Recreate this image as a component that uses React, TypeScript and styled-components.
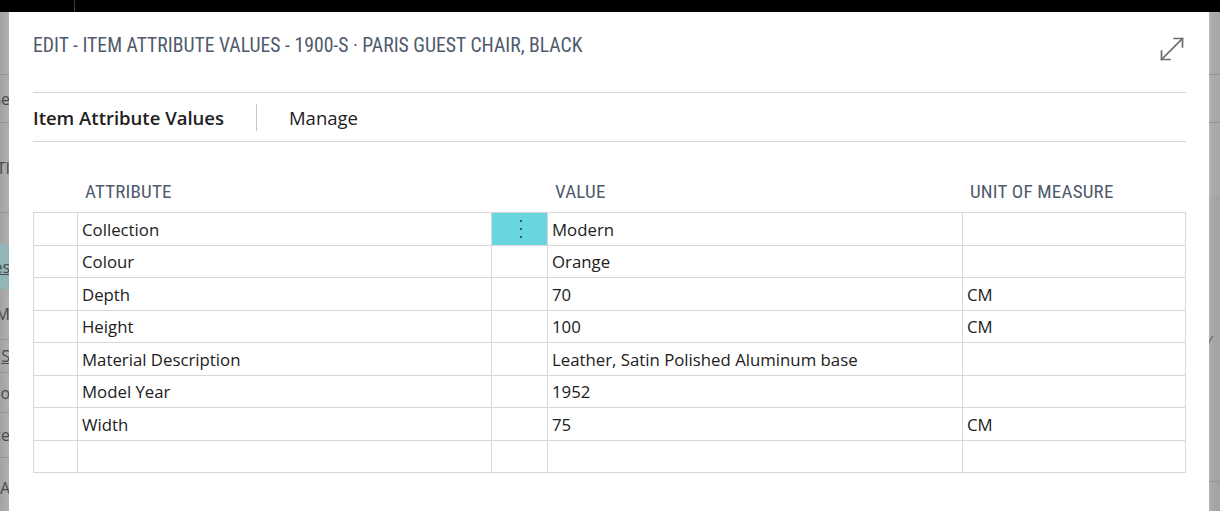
import React from "react";
import styled, { createGlobalStyle } from "styled-components";

const GlobalStyle = createGlobalStyle`
  html, body { margin: 0; padding: 0; background: #000; }
  body { width: 1220px; height: 511px; overflow: hidden; }
  * { box-sizing: border-box; }
`;

const Screen = styled.div`
  width: 1220px;
  height: 511px;
  display: flex;
  flex-direction: column;
  background: #000;
  overflow: hidden;
`;

const TopBar = styled.div`
  height: 12px;
  flex: none;
  background: #000;
  display: flex;
`;

const TopBarDivider = styled.div`
  margin-left: 74px;
  width: 1px;
  background: #3a3a3a;
`;

const Body = styled.div`
  flex: 1;
  display: flex;
  min-height: 0;
`;

const BackStrip = styled.div<{ $w: number; $side: "left" | "right" }>`
  width: ${(p) => p.$w}px;
  flex: none;
  display: flex;
  flex-direction: column;
  overflow: hidden;
  background: ${(p) =>
    p.$side === "left"
      ? "linear-gradient(to right, #a2a2a2, #b0b0b0)"
      : "linear-gradient(to right, #b4b4b4, #a6a6a6 30%, #a2a2a2)"};
`;

const BackRow = styled.div<{ $h: number; $line?: boolean; $teal?: boolean; $light?: boolean }>`
  height: ${(p) => p.$h}px;
  flex: none;
  display: flex;
  align-items: center;
  justify-content: flex-end;
  overflow: hidden;
  border-bottom: ${(p) => (p.$line ? "1px solid #939393" : "none")};
  background: ${(p) => (p.$teal ? "#92b6b7" : p.$light ? "rgba(255,255,255,0.06)" : "transparent")};
  font-family: "Open Sans", "Noto Sans", sans-serif;
  font-size: 16px;
  color: #4a4a4a;
  white-space: nowrap;
`;

const BackText = styled.span<{ $u?: boolean }>`
  text-decoration: ${(p) => (p.$u ? "underline" : "none")};
  margin-right: -1px;
`;

const RightMark = styled.span`
  font-family: "Open Sans", sans-serif;
  font-size: 14px;
  color: #5b6470;
  margin-right: auto;
  margin-left: -2px;
  font-style: italic;
`;

const Dialog = styled.div`
  flex: 1;
  background: #fff;
  display: flex;
  flex-direction: column;
  padding: 0 23px 0 24px;
`;

const DialogHeader = styled.div`
  height: 80px;
  flex: none;
  display: flex;
  align-items: flex-start;
  justify-content: space-between;
  padding-top: 23px;
`;

const Title = styled.h1`
  margin: 0;
  font-family: "Roboto Condensed", Roboto, sans-serif;
  font-stretch: condensed;
  font-weight: 400;
  font-size: 19.7px;
  line-height: 22px;
  color: #4f5b6c;
  letter-spacing: 0;
  white-space: nowrap;
`;

const ExpandButton = styled.button`
  border: none;
  background: transparent;
  padding: 0;
  margin: 1px 1px 0 0;
  width: 26px;
  height: 26px;
  display: flex;
  align-items: center;
  justify-content: center;
  cursor: pointer;
`;

const ActionBar = styled.div`
  height: 50px;
  flex: none;
  display: flex;
  align-items: center;
  padding-top: 1px;
  border-top: 1px solid #d4d4d4;
  border-bottom: 1px solid #d4d4d4;
`;

const ActionItem = styled.span<{ $bold?: boolean }>`
  font-family: "Open Sans", "Noto Sans", sans-serif;
  font-stretch: ${(p) => (p.$bold ? "95%" : "100%")};
  font-size: 18.5px;
  font-weight: ${(p) => (p.$bold ? 600 : 400)};
  color: #212121;
  white-space: nowrap;
`;

const ActionDivider = styled.span`
  width: 1px;
  height: 27px;
  background: #c4c4c4;
  margin: 0 32px 0 32px;
`;

const GridHeader = styled.div`
  margin-top: 30px;
  height: 40px;
  display: grid;
  grid-template-columns: 45px 414px 56px 415px 223px;
  align-items: center;
`;

const HeaderCell = styled.div`
  font-family: "Roboto Condensed", Roboto, sans-serif;
  font-stretch: condensed;
  font-size: 19px;
  letter-spacing: 0.2px;
  color: #4f5b6c;
  padding-left: 7px;
  white-space: nowrap;
  margin-top: -2px;
`;

const Grid = styled.div`
  display: grid;
  grid-template-columns: 45px 414px 56px 415px 223px;
  grid-auto-rows: 32.5px;
  width: 1153px;
  border-top: 1px solid #d8d8d8;
`;

const Cell = styled.div<{ $first?: boolean; $active?: boolean }>`
  display: flex;
  align-items: center;
  padding-left: ${(p) => (p.$first ? 0 : "4px")};
  padding-top: 1px;
  border-right: 1px solid #d8d8d8;
  border-bottom: 1px solid #d8d8d8;
  border-left: ${(p) => (p.$first ? "1px solid #d8d8d8" : "none")};
  background: ${(p) => (p.$active ? "#67d6df" : "#fff")};
  justify-content: ${(p) => (p.$active ? "center" : "flex-start")};
  font-family: "Open Sans", "Noto Sans", sans-serif;
  font-stretch: 92%;
  font-size: 16.8px;
  color: #212121;
  white-space: nowrap;
  overflow: hidden;
`;

const Dots = styled.span`
  display: flex;
  flex-direction: column;
  gap: 6px;
  margin-left: -1px;
  & > i {
    display: block;
    width: 2px;
    height: 2px;
    border-radius: 1px;
    background: #2b2b2b;
  }
`;

type Row = { attr: string; value: string; uom: string };

const rows: Row[] = [
  { attr: "Collection", value: "Modern", uom: "" },
  { attr: "Colour", value: "Orange", uom: "" },
  { attr: "Depth", value: "70", uom: "CM" },
  { attr: "Height", value: "100", uom: "CM" },
  { attr: "Material Description", value: "Leather, Satin Polished Aluminum base", uom: "" },
  { attr: "Model Year", value: "1952", uom: "" },
  { attr: "Width", value: "75", uom: "CM" },
  { attr: "", value: "", uom: "" },
];

const leftRows: { h: number; t?: string; line?: boolean; teal?: boolean; u?: boolean }[] = [
  { h: 63, line: true },
  { h: 48, t: "Se", line: true },
  { h: 90, t: "TI", line: true },
  { h: 31 },
  { h: 45, t: "es", teal: true, u: true },
  { h: 51, t: "M", line: true },
  { h: 33, t: "S", line: true, u: true },
  { h: 40, t: "o", line: true },
  { h: 45, t: "ce", line: true },
  { h: 60, t: "DA" },
];

const rightRows: { h: number; line?: boolean; mark?: boolean; light?: boolean }[] = [
  { h: 63, line: true, light: true },
  { h: 48, line: true, light: true },
  { h: 72, light: true },
  { h: 130 },
  { h: 30, mark: true },
  { h: 127, line: true },
  { h: 40 },
];

function ExpandIcon() {
  return (
    <svg width="26" height="26" viewBox="0 0 26 26" fill="none">
      <g stroke="#6e6e6e" strokeWidth="1.7" strokeLinecap="square">
        <path d="M2.5 23.5 L23.5 2.5" />
        <path d="M15 2.5 H23.5 V11" />
        <path d="M2.5 15 V23.5 H11" />
      </g>
    </svg>
  );
}

export default function App() {
  return (
    <>
      <GlobalStyle />
      <Screen>
        <TopBar>
          <TopBarDivider />
        </TopBar>
        <Body>
          <BackStrip $w={9} $side="left">
            {leftRows.map((r, i) => (
              <BackRow key={i} $h={r.h} $line={r.line} $teal={r.teal}>
                {r.t ? <BackText $u={r.u}>{r.t}</BackText> : null}
              </BackRow>
            ))}
          </BackStrip>
          <Dialog>
            <DialogHeader>
              <Title>EDIT - ITEM ATTRIBUTE VALUES - 1900-S · PARIS GUEST CHAIR, BLACK</Title>
              <ExpandButton aria-label="Expand">
                <ExpandIcon />
              </ExpandButton>
            </DialogHeader>
            <ActionBar>
              <ActionItem $bold>Item Attribute Values</ActionItem>
              <ActionDivider />
              <ActionItem>Manage</ActionItem>
            </ActionBar>
            <GridHeader>
              <span />
              <HeaderCell>ATTRIBUTE</HeaderCell>
              <span />
              <HeaderCell>VALUE</HeaderCell>
              <HeaderCell>UNIT OF MEASURE</HeaderCell>
            </GridHeader>
            <Grid>
              {rows.map((r, i) => (
                <React.Fragment key={i}>
                  <Cell $first />
                  <Cell>{r.attr}</Cell>
                  <Cell $active={i === 0}>
                    {i === 0 ? (
                      <Dots>
                        <i />
                        <i />
                        <i />
                      </Dots>
                    ) : null}
                  </Cell>
                  <Cell>{r.value}</Cell>
                  <Cell>{r.uom}</Cell>
                </React.Fragment>
              ))}
            </Grid>
          </Dialog>
          <BackStrip $w={11} $side="right">
            {rightRows.map((r, i) => (
              <BackRow key={i} $h={r.h} $line={r.line} $light={r.light}>
                {r.mark ? <RightMark>/</RightMark> : null}
              </BackRow>
            ))}
          </BackStrip>
        </Body>
      </Screen>
    </>
  );
}
